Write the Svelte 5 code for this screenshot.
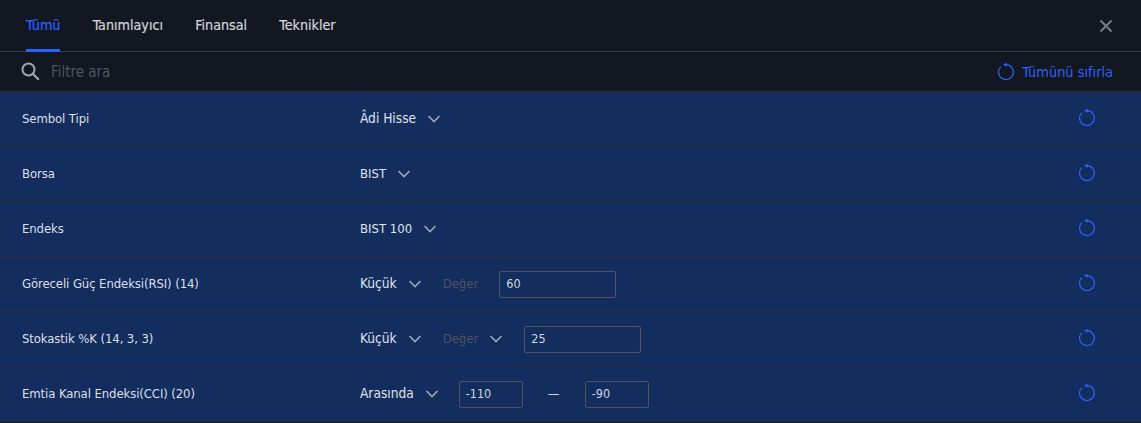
<script lang="ts">
  const tabs = ['Tümü', 'Tanımlayıcı', 'Finansal', 'Teknikler'];
  const active = 'Tümü';

  type Row = {
    label: string;
    op: string;
    placeholder?: string;
    placeholderMenu?: boolean;
    values?: string[];
  };

  const rows: Row[] = [
    { label: 'Sembol Tipi', op: 'Âdi Hisse' },
    { label: 'Borsa', op: 'BIST' },
    { label: 'Endeks', op: 'BIST 100' },
    { label: 'Göreceli Güç Endeksi(RSI) (14)', op: 'Küçük', placeholder: 'Değer', values: ['60'] },
    { label: 'Stokastik %K (14, 3, 3)', op: 'Küçük', placeholder: 'Değer', placeholderMenu: true, values: ['25'] },
    { label: 'Emtia Kanal Endeksi(CCI) (20)', op: 'Arasında', values: ['-110', '-90'] }
  ];
</script>

{#snippet chevron()}
  <svg class="chevron" width="14" height="14" viewBox="0 0 14 14" fill="none">
    <path d="M1.5 4 7 9.5 12.5 4" stroke="currentColor" stroke-width="1.6" />
  </svg>
{/snippet}

{#snippet reset()}
  <svg class="reset" width="18" height="18" viewBox="0 0 18 18" fill="none">
    <path d="M9 1.7a7.4 7.4 0 1 1-5 1.9" stroke="currentColor" stroke-width="1.2" />
    <path d="M6 1.7 9.6-.4v4.2z" fill="currentColor" />
  </svg>
{/snippet}

<div class="screen">
  <header class="tabs">
    <nav class="tab-list">
      {#each tabs as tab}
        <span class="tab" class:active={tab === active}>{tab}</span>
      {/each}
    </nav>
    <svg class="close" width="14" height="14" viewBox="0 0 14 14" fill="none">
      <path d="M1.5 1.5l11 11M12.5 1.5l-11 11" stroke="currentColor" stroke-width="2" />
    </svg>
  </header>

  <div class="search">
    <svg class="search-icon" width="19" height="19" viewBox="0 0 19 19" fill="none">
      <circle cx="7.5" cy="7.5" r="6" stroke="currentColor" stroke-width="2" />
      <path d="M11.8 11.8l6 6" stroke="currentColor" stroke-width="2.2" />
    </svg>
    <span class="placeholder">Filtre ara</span>
    <span class="reset-all">
      {@render reset()}
      Tümünü sıfırla
    </span>
  </div>

  <div class="rows">
    {#each rows as row}
      <div class="row">
        <span class="label">{row.label}</span>
        <div class="controls">
          <span class="op" class:caps={row.op.startsWith('BIST')}>{row.op}</span>
          {@render chevron()}
          {#if row.placeholder}
            <span class="value-type">{row.placeholder}</span>
            {#if row.placeholderMenu}
              {@render chevron()}
            {/if}
          {/if}
          {#if row.values}
            {#if row.values.length === 1}
              <span class="input wide">{row.values[0]}</span>
            {:else}
              <span class="input narrow">{row.values[0]}</span>
              <span class="dash">—</span>
              <span class="input narrow">{row.values[1]}</span>
            {/if}
          {/if}
        </div>
        <span class="row-reset">{@render reset()}</span>
      </div>
    {/each}
  </div>
</div>

<style>
  :global(body) {
    background: #131722;
  }

  .screen {
    width: 1141px;
    height: 423px;
    overflow: hidden;
    background: #131722;
    font-family: "DejaVu Sans", sans-serif;
    font-stretch: condensed;
    font-size: 13px;
    color: #d1d4dc;
  }

  .tabs {
    display: flex;
    align-items: center;
    justify-content: space-between;
    height: 51px;
    padding: 0 28px 0 26px;
    border-bottom: 1px solid #363a45;
  }

  .tab-list {
    display: flex;
    gap: 32.2px;
    height: 100%;
  }

  .tab {
    display: flex;
    align-items: center;
    height: 49px;
    border-bottom: 3px solid transparent;
    margin-bottom: -1px;
    font-size: 14.2px;
    -webkit-text-stroke: 0.2px currentColor;
    color: #d1d4dc;
  }

  .tab.active {
    color: #2962ff;
    border-bottom-color: #2962ff;
  }

  .close {
    color: #787b86;
  }

  .search {
    display: flex;
    align-items: center;
    height: 39px;
    padding: 0 28px 0 21px;
    border-bottom: 1px solid #2a2e39;
  }

  .search-icon {
    color: #a3a6af;
    margin-right: 11px;
  }

  .placeholder {
    color: #50535e;
    flex: 1;
    font-size: 15px;
  }

  .reset-all {
    display: flex;
    align-items: center;
    gap: 7px;
    color: #2962ff;
    font-size: 14.4px;
  }

  .rows {
    background: #132d5e;
  }

  .row {
    display: flex;
    align-items: center;
    height: 54px;
    padding: 0 45px 0 22px;
    border-bottom: 1px solid #2a2e39;
  }

  .label {
    width: 338px;
    flex: none;
    letter-spacing: -0.1px;
    color: #dcdfe7;
    position: relative;
    top: -1px;
  }

  .controls {
    display: flex;
    align-items: center;
    flex: 1;
    color: #d1d4dc;
  }

  .op {
    font-size: 13.6px;
    color: #e0e3eb;
    position: relative;
    top: -1px;
  }

  .op.caps {
    font-size: 13px;
  }

  .chevron {
    color: #a3a6af;
    margin-left: 11px;
  }

  .value-type {
    color: #50535e;
    margin-left: 21px;
    position: relative;
    top: -1px;
  }

  .input {
    display: flex;
    align-items: center;
    box-sizing: border-box;
    height: 27px;
    padding: 0 6px 2px;
    border: 1px solid #50535e;
    border-radius: 2px;
    font-size: 12.5px;
    color: #d1d4dc;
  }

  .input.wide {
    width: 117px;
    margin-left: 21px;
  }

  .input.narrow {
    width: 64px;
  }

  .controls > .chevron + .input.narrow {
    margin-left: 20px;
  }

  .dash {
    width: 62px;
    text-align: center;
    color: #d1d4dc;
    position: relative;
    top: -1px;
  }

  .row-reset {
    display: flex;
    margin-top: -2px;
    color: #2962ff;
  }
</style>
